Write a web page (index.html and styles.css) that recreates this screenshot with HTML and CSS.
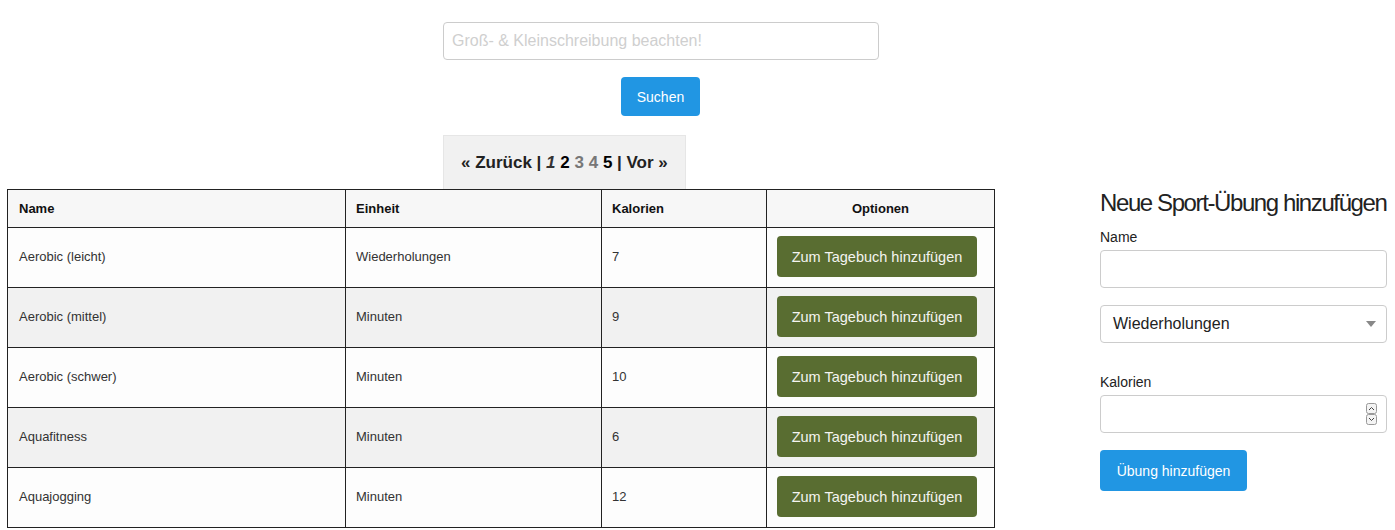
FILE: index.html
```html
<!DOCTYPE html>
<html lang="de">
<head>
<meta charset="utf-8">
<title>Sport</title>
<link rel="stylesheet" href="styles.css">
</head>
<body>
<div class="search">
  <input class="search-input" type="text" placeholder="Groß- &amp; Kleinschreibung beachten!">
  <div class="search-btn-row"><button class="btn-blue btn-search">Suchen</button></div>
  <div class="pager">« Zurück | <i>1</i> <span class="cur">2</span> <span class="dim">3</span> <span class="dim">4</span> <span class="cur">5</span> | Vor »</div>
</div>
<div class="main">
  <table class="tbl">
    <thead>
      <tr><th class="c1">Name</th><th class="c2">Einheit</th><th class="c3">Kalorien</th><th class="c4 center">Optionen</th></tr>
    </thead>
    <tbody>
      <tr><td>Aerobic (leicht)</td><td>Wiederholungen</td><td>7</td><td><button class="btn-green">Zum Tagebuch hinzufügen</button></td></tr>
      <tr class="odd"><td>Aerobic (mittel)</td><td>Minuten</td><td>9</td><td><button class="btn-green">Zum Tagebuch hinzufügen</button></td></tr>
      <tr><td>Aerobic (schwer)</td><td>Minuten</td><td>10</td><td><button class="btn-green">Zum Tagebuch hinzufügen</button></td></tr>
      <tr class="odd"><td>Aquafitness</td><td>Minuten</td><td>6</td><td><button class="btn-green">Zum Tagebuch hinzufügen</button></td></tr>
      <tr><td>Aquajogging</td><td>Minuten</td><td>12</td><td><button class="btn-green">Zum Tagebuch hinzufügen</button></td></tr>
    </tbody>
  </table>
  <div class="side">
    <h2 class="side-title">Neue Sport-Übung hinzufügen</h2>
    <label class="lbl">Name</label>
    <input class="field" type="text">
    <div class="select">
      <span>Wiederholungen</span>
      <svg class="arrow" width="10" height="6" viewBox="0 0 10 6"><path d="M0 0H10L5 6Z" fill="#888"/></svg>
    </div>
    <label class="lbl lbl-kal">Kalorien</label>
    <div class="num">
      <span class="spin">
        <svg width="11" height="22" viewBox="0 0 11 22"><rect x="0.5" y="0.5" width="10" height="10" rx="2" fill="#f4f4f4" stroke="#999"/><rect x="0.5" y="11.5" width="10" height="10" rx="2" fill="#f4f4f4" stroke="#999"/><path d="M3 7L5.5 4.5L8 7" fill="none" stroke="#444" stroke-width="1"/><path d="M3 15L5.5 17.5L8 15" fill="none" stroke="#444" stroke-width="1"/></svg>
      </span>
    </div>
    <button class="btn-blue btn-add">Übung hinzufügen</button>
  </div>
</div>
</body>
</html>
```
FILE: styles.css
```css
html, body {
  margin: 0;
  padding: 0;
  background: #fff;
  font-family: "Liberation Sans", Arial, sans-serif;
  color: #333;
  overflow: hidden;
}
.search {
  width: 436px;
  margin-left: 443px;
  padding-top: 22px;
}
.search-input {
  display: block;
  box-sizing: border-box;
  width: 436px;
  height: 38px;
  border: 1px solid #ccc;
  border-radius: 4px;
  padding: 6px 8px;
  font-family: "Liberation Sans", Arial, sans-serif;
  font-size: 16px;
  color: #333;
}
.search-input::placeholder { color: #cfcfcf; }
.search-btn-row {
  display: flex;
  justify-content: center;
  margin-top: 17px;
  padding-right: 1px;
}
.btn-blue {
  background: #2196e3;
  color: #fff;
  border: none;
  border-radius: 4px;
  font-family: "Liberation Sans", Arial, sans-serif;
  cursor: pointer;
}
.btn-search {
  width: 79px;
  height: 39px;
  font-size: 14px;
}
.pager {
  display: inline-block;
  margin-top: 19px;
  height: 54px;
  line-height: 54px;
  padding: 0 17px;
  background: #f1f1f1;
  border: 1px solid #e6e6e6;
  border-bottom: none;
  box-sizing: border-box;
  font-size: 17px;
  font-weight: bold;
  color: #222;
}
.pager i { color: #333; }
.pager .cur { color: #000; }
.pager .dim { color: #777; }
.main {
  display: flex;
  align-items: flex-start;
  padding-left: 7px;
}
.tbl {
  width: 988px;
  border-collapse: collapse;
  border: 1px solid #222;
  font-size: 13px;
  color: #333;
}
.tbl th, .tbl td {
  border: 1px solid #222;
  text-align: left;
  padding: 0 10px;
}
.tbl th:first-child, .tbl td:first-child { padding-left: 11px; }
.tbl th {
  height: 37px;
  background: #f7f7f7;
  color: #111;
  font-weight: bold;
}
.tbl th.center { text-align: center; }
.tbl .c1 { width: 316px; }
.tbl .c2 { width: 235px; }
.tbl .c3 { width: 144px; }
.tbl td {
  height: 57px;
  padding-bottom: 2px;
  background: #fdfdfd;
}
.tbl tr.odd td { background: #f1f1f1; }
.btn-green {
  display: block;
  width: 200px;
  height: 41px;
  background: #596d31;
  color: #f4f4f0;
  border: none;
  border-radius: 4px;
  font-family: "Liberation Sans", Arial, sans-serif;
  font-size: 14.5px;
}
.side {
  width: 287px;
  margin-left: 105px;
  display: flex;
  flex-direction: column;
}
.side-title {
  margin: 0;
  padding-top: 0;
  font-size: 24px;
  font-weight: normal;
  letter-spacing: -1.4px;
  white-space: nowrap;
  color: #222;
  line-height: 28px;
}
.lbl {
  display: block;
  font-size: 14px;
  color: #222;
  margin-top: 12px;
  margin-bottom: 5px;
}
.lbl-kal { margin-top: 31px; }
.field, .select, .num {
  box-sizing: border-box;
  width: 287px;
  height: 38px;
  border: 1px solid #ccc;
  border-radius: 4px;
  background: #fff;
  font-family: "Liberation Sans", Arial, sans-serif;
}
.select {
  margin-top: 17px;
  display: flex;
  align-items: center;
  justify-content: space-between;
  padding: 0 10px 0 12px;
  font-size: 16px;
  color: #222;
}
.num {
  display: flex;
  align-items: center;
  justify-content: flex-end;
  padding-right: 9px;
}
.spin { display: flex; }
.btn-add {
  margin-top: 17px;
  width: 147px;
  height: 41px;
  font-size: 14px;
}
```
